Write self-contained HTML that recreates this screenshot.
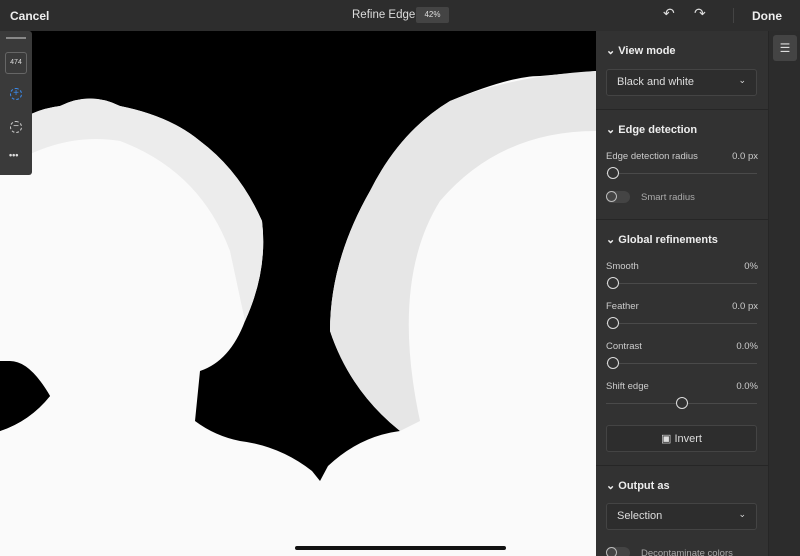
<!DOCTYPE html>
<html><head><style>
body{margin:0;width:800px;height:556px;overflow:hidden;background:#000;font-family:"Liberation Sans",sans-serif;color:#ddd;position:relative}
.top{position:absolute;left:0;top:0;width:800px;height:31px;background:#2d2d2d;}
.t{position:absolute;font-size:12px;top:9px}
.panel{position:absolute;left:596px;top:31px;width:172px;height:525px;background:#323232;overflow:hidden}
.strip{position:absolute;left:768px;top:31px;width:32px;height:525px;background:#2c2c2c;border-left:1px solid #262626}
.hd{position:absolute;left:10px;font-size:11px;font-weight:bold;color:#eee}
.lb{position:absolute;left:10px;font-size:9.5px;color:#ccc}
.vl{position:absolute;right:10px;font-size:9.5px;color:#ccc}
.sl{position:absolute;left:10px;width:151px;height:1px;background:#4a4a4a}
.kn{position:absolute;width:10px;height:10px;border:1.5px solid #ddd;border-radius:50%;background:#323232}
.dd{position:absolute;left:10px;width:149px;height:25px;border:1px solid #444;border-radius:3px;background:#2d2d2d;font-size:11px}
.sep{position:absolute;left:0;width:172px;height:1px;background:#262626}
.tg{position:absolute;left:10px;width:24px;height:12px;border-radius:7px;background:#444}
.tg::after{content:"";position:absolute;left:0;top:0;width:9px;height:9px;border:1.5px solid #bbb;border-radius:50%}
</style></head><body>
<svg style="position:absolute;left:0;top:31px" width="596" height="525">
<rect width="596" height="525" fill="#000"/>
<path d="M0 110 Q20 80 60 75 Q90 60 120 75 Q170 85 200 110 Q240 140 262 190 Q268 240 245 290 Q230 330 200 340 L195 390 Q215 405 240 410 Q280 415 312 440 L320 450 L328 435 Q360 405 400 400 Q350 360 330 300 Q330 230 370 160 Q400 100 450 70 Q510 45 540 45 L596 40 L596 525 L0 525 L0 400 Q30 390 50 365 Q30 330 10 330 L0 330 Z" fill="#fafafa"/>
<path d="M0 110 Q20 80 60 75 Q90 60 120 75 Q170 85 200 110 Q240 140 262 190 Q268 240 245 290 L230 220 Q200 140 120 110 Q60 100 0 140Z" fill="#ececec"/>
<path d="M400 400 Q350 360 330 300 Q330 230 370 160 Q400 100 450 70 Q510 45 596 40 L596 100 Q500 100 440 170 Q390 250 420 390Z" fill="#e6e6e6"/>
<path d="M0 330 Q30 330 50 365 Q30 390 0 400Z" fill="#000"/>
</svg>
<div class="top">
<div class="t" style="left:10px;font-weight:bold;color:#eee">Cancel</div>
<div class="t" style="left:352px;font-size:11.5px">Refine Edge</div>
<div style="position:absolute;left:416px;top:7px;width:33px;height:16px;background:#444;border-radius:2px;font-size:8px;text-align:center;line-height:16px">42%</div>
<div class="t" style="left:663px;top:5px;font-size:14px">↶</div>
<div class="t" style="left:694px;top:5px;font-size:14px">↷</div>
<div style="position:absolute;left:733px;top:8px;width:1px;height:15px;background:#444"></div>
<div class="t" style="left:752px;font-weight:bold;color:#eee">Done</div>
</div>
<div style="position:absolute;left:0;top:31px;width:32px;height:144px;background:#3a3a3a;border-radius:0 3px 3px 0">
<div style="position:absolute;left:6px;top:6px;width:20px;height:2px;background:#888"></div>
<div style="position:absolute;left:5px;top:21px;width:20px;height:20px;border:1px solid #666;border-radius:3px;font-size:7px;text-align:center;line-height:20px">474</div>
<div style="position:absolute;left:10px;top:57px;width:10px;height:10px;border:1px dashed #3b8cf0;border-radius:50%;color:#3b8cf0;font-size:10px;line-height:10px;text-align:center">+</div>
<div style="position:absolute;left:10px;top:90px;width:10px;height:10px;border:1px dashed #ccc;border-radius:50%;font-size:10px;line-height:9px;text-align:center">−</div>
<div style="position:absolute;left:9px;top:119px;font-size:9px;font-weight:bold">•••</div>
</div>
<div class="panel">
<div class="hd" style="top:13px">⌄ View mode</div>
<div class="dd" style="top:38px"><span style="position:absolute;left:10px;top:6px">Black and white</span><span style="position:absolute;right:10px;top:5px;font-size:9px">⌄</span></div>
<div class="sep" style="top:78px"></div>
<div class="hd" style="top:92px">⌄ Edge detection</div>
<div class="lb" style="top:120px">Edge detection radius</div><div class="vl" style="top:120px">0.0 px</div>
<div class="sl" style="top:142px"></div><div class="kn" style="left:11px;top:136px"></div>
<div class="tg" style="top:160px"></div><div class="lb" style="left:45px;top:161px;color:#aaa">Smart radius</div>
<div class="sep" style="top:188px"></div>
<div class="hd" style="top:202px">⌄ Global refinements</div>
<div class="lb" style="top:230px">Smooth</div><div class="vl" style="top:230px">0%</div>
<div class="sl" style="top:252px"></div><div class="kn" style="left:11px;top:246px"></div>
<div class="lb" style="top:270px">Feather</div><div class="vl" style="top:270px">0.0 px</div>
<div class="sl" style="top:292px"></div><div class="kn" style="left:11px;top:286px"></div>
<div class="lb" style="top:310px">Contrast</div><div class="vl" style="top:310px">0.0%</div>
<div class="sl" style="top:332px"></div><div class="kn" style="left:11px;top:326px"></div>
<div class="lb" style="top:350px">Shift edge</div><div class="vl" style="top:350px">0.0%</div>
<div class="sl" style="top:372px"></div><div class="kn" style="left:80px;top:366px"></div>
<div class="dd" style="top:394px;text-align:center"><span style="position:relative;top:6px">▣ Invert</span></div>
<div class="sep" style="top:434px"></div>
<div class="hd" style="top:448px">⌄ Output as</div>
<div class="dd" style="top:472px"><span style="position:absolute;left:10px;top:6px">Selection</span><span style="position:absolute;right:10px;top:5px;font-size:9px">⌄</span></div>
<div class="tg" style="top:516px"></div><div class="lb" style="left:45px;top:517px;color:#aaa">Decontaminate colors</div>
</div>
<div class="strip"><div style="position:absolute;left:4px;top:4px;width:24px;height:26px;background:#444;border-radius:3px;text-align:center;font-size:12px;line-height:26px">☰</div></div>
<div style="position:absolute;left:295px;top:546px;width:211px;height:4px;background:#111;border-radius:2px"></div>
</body></html>
